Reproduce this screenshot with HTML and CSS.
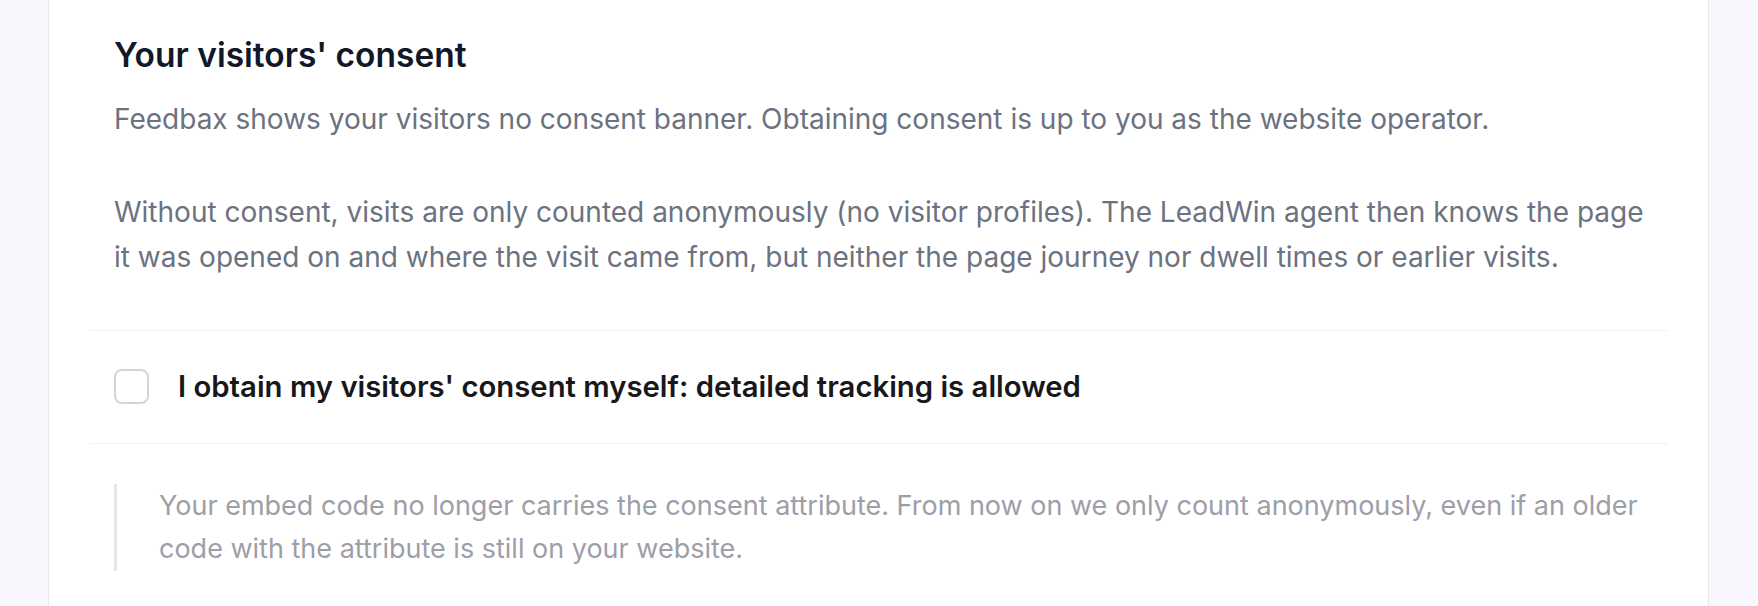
FILE: index.html
```html
<!DOCTYPE html>
<html lang="en">
<head>
    <meta charset="UTF-8">
    <meta name="viewport" content="width=device-width, initial-scale=1.0">
    <title>Visitor consent</title>
    <link rel="stylesheet" href="styles.css">
</head>
<body>
    <div class="card">
        <div class="section intro">
            <h2 class="title">Your visitors' consent</h2>
            <p class="text">Feedbax shows your visitors no consent banner. Obtaining consent is up to you as the website operator.</p>
            <p class="text spaced">Without consent, visits are only counted anonymously (no visitor profiles). The LeadWin agent then knows the page it was opened on and where the visit came from, but neither the page journey nor dwell times or earlier visits.</p>
        </div>
        <label class="section check-row">
            <input type="checkbox" class="check">
            <span class="check-label">I obtain my visitors' consent myself: detailed tracking is allowed</span>
        </label>
        <div class="section note-wrap">
            <p class="note">Your embed code no longer carries the consent attribute. From now on we only count anonymously, even if an older code with the attribute is still on your website.</p>
        </div>
    </div>
</body>
</html>
```

FILE: styles.css
```css
html, body {
    margin: 0;
    height: 100%;
}
body {
    background-color: #f7f7fd;
    font-family: Inter, "Noto Sans", Arial, sans-serif;
    overflow: hidden;
}
.card {
    box-sizing: border-box;
    min-height: 100vh;
    margin: 0 49px 0 48px;
    padding: 0 40px 0 41px;
    background: #ffffff;
    border-left: 1px solid #e5e7eb;
    border-right: 1px solid #e5e7eb;
}
.section {
    padding: 0 24px;
}
.intro {
    padding-top: 33px;
    padding-bottom: 49px;
    border-bottom: 1px solid #f1f2f4;
}
.title {
    margin: 0;
    font-size: 33.5px;
    line-height: 44px;
    font-weight: 600;
    color: #111827;
}
.text {
    margin: 20px 0 0;
    font-size: 28px;
    line-height: 45.5px;
    color: #6b7280;
}
.text.spaced {
    margin-top: 47px;
}
.check-row {
    display: flex;
    align-items: center;
    gap: 29px;
    padding-top: 36px;
    padding-bottom: 36px;
    border-bottom: 1px solid #f1f2f4;
    cursor: pointer;
}
.check {
    appearance: none;
    -webkit-appearance: none;
    box-sizing: border-box;
    flex: none;
    width: 35px;
    height: 35px;
    margin: 0;
    border: 2px solid #d4d5db;
    border-radius: 8px;
    background: #ffffff;
}
.check-label {
    font-size: 29.3px;
    line-height: 40px;
    font-weight: 600;
    color: #18181b;
}
.note-wrap {
    padding-top: 40px;
    padding-bottom: 40px;
}
.note {
    margin: 0;
    padding-left: 42px;
    border-left: 3px solid #e7e7ea;
    font-size: 27px;
    line-height: 43.5px;
    color: #9d9ea8;
}
```
